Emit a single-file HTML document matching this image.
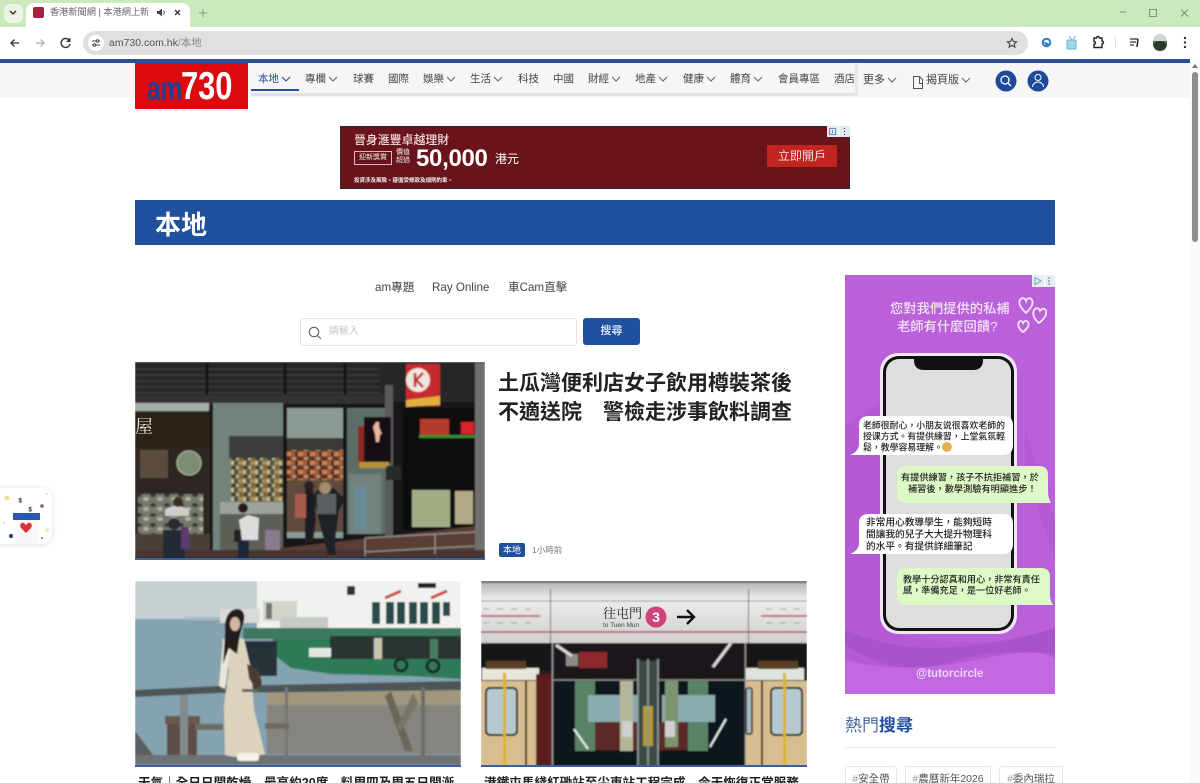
<!DOCTYPE html>
<html lang="zh-Hant"><head><meta charset="utf-8"><title>am730</title>
<style>
html,body{margin:0;padding:0;width:1200px;height:783px;overflow:hidden;background:#fff}
body{position:relative;font-family:"Liberation Sans","Noto Sans CJK TC",sans-serif;color:#333}
.a{position:absolute;white-space:nowrap}
.n{position:absolute;top:72px;font-size:10.5px;line-height:15px;color:#444;white-space:nowrap}
svg{position:absolute;overflow:hidden}
</style></head><body>
<!-- browser chrome -->
<div class="a" style="left:0;top:0;width:1200px;height:27px;background:#cbe8be"></div>
<div class="a" style="left:4px;top:4px;width:19px;height:19px;background:#eaf5e4;border-radius:6px"></div>
<div class="a" style="left:26px;top:3px;width:164px;height:24px;background:#fff;border-radius:8px 8px 0 0"></div>
<div class="a" style="left:33px;top:7px;width:11px;height:11px;background:#a5203f;border-radius:2px"></div>
<div class="a" style="left:50px;top:5px;font-size:9.2px;line-height:15px;color:#666;width:98px;overflow:hidden">香港新聞網 | 本港網上新聞</div>
<div class="a" style="left:83px;top:31px;width:945px;height:24px;background:#e0e0e0;border-radius:12px"></div>
<div class="a" style="left:88px;top:35px;width:16px;height:16px;background:#fff;border-radius:8px"></div>
<svg style="left:88px;top:35px" width="16" height="16" fill="none" stroke="#444"><path d="M4 6h4M11 6h1M4 10h1M8 10h4"/><circle cx="9.500" cy="6" r="1.300"/><circle cx="6.500" cy="10" r="1.300"/></svg>
<div class="a" style="left:109px;top:35px;font-size:10.500px;line-height:16px;color:#555">am730.com.hk<span style="color:#888">/本地</span></div>
<svg style="left:0;top:0" width="1200" height="62" fill="none">
<path d="M10 11l3 3 3-3" stroke="#333" stroke-width="1.500"/>
<path d="M157 11h2l3-2.500v8l-3-2.500h-2z" fill="#444"/><path d="M163.500 10.500q1.500 2 0 4" stroke="#444"/>
<path d="M175 10l5 5m0-5l-5 5" stroke="#333" stroke-width="1.300"/>
<path d="M203 9v8m-4-4h8" stroke="#8aa085" stroke-width="1"/>
<path d="M1120 12h6" stroke="#80907c"/><rect x="1149.500" y="9.500" width="7" height="7" stroke="#80907c"/><path d="M1181 9.500l7 7m0-7l-7 7" stroke="#80907c"/>
<path d="M19 43h-8m3.500-3.500L11 43l3.500 3.500" stroke="#333" stroke-width="1.300"/>
<path d="M36 43h8m-3.500-3.500L44 43l-3.500 3.500" stroke="#aaa" stroke-width="1.200"/>
<path d="M69 40a4.500 4.500 0 1 0 1 4" stroke="#333" stroke-width="1.400"/><path d="M70 38v3.500h-3.500" fill="#333" stroke="#333"/>
<path d="M1012 38.500l1.400 3 3.200.3-2.400 2.100.7 3.200-2.900-1.700-2.900 1.700.7-3.200-2.400-2.100 3.200-.3z" stroke="#444" stroke-width="1.100"/>
<circle cx="1046.500" cy="42.500" r="3.800" stroke="#2f80c8" stroke-width="2"/><path d="M1043 41l4 6 3-3z" fill="#2f80c8"/>
<rect x="1067" y="40" width="9" height="9" rx="1" fill="#a8d6e8" stroke="#63b4d2"/><path d="M1069 36l2.500 3.500m4-3.500l-2.500 3.500" stroke="#63b4d2"/>
<path d="M1094 38h2.500a1.500 1.500 0 0 1 3 0h2.500v3a1.500 1.500 0 0 1 0 3v3.500h-8v-3a1.500 1.500 0 0 0 0-3z" stroke="#222" stroke-width="1.400"/>
<path d="M1115.500 37v11" stroke="#ddd"/>
<path d="M1130 39h8m-8 3h6m-6 3h4" stroke="#333" stroke-width="1.200"/><path d="M1138 39l-1 8" stroke="#222" stroke-width="1.500"/>
<circle cx="1160" cy="42.500" r="7" fill="#5a6a52"/><path d="M1153 41a7 7 0 0 1 14 0z" fill="#cfd8d8"/><path d="M1153 44q7-6 14 0a7 7 0 0 1-14 0z" fill="#2c3a2a"/>
<circle cx="1185" cy="38" r="1.200" fill="#333"/><circle cx="1185" cy="42.500" r="1.200" fill="#333"/><circle cx="1185" cy="47" r="1.200" fill="#333"/>
</svg>
<!-- site nav -->
<div class="a" style="left:0;top:59px;width:1190px;height:4px;background:#2a5099"></div>
<div class="a" style="left:0;top:63px;width:1190px;height:35px;background:#f6f6f6"></div>
<div class="a" style="left:251px;top:93px;width:605px;height:3px;background:#e2e2e2"></div>
<div class="a" style="left:855px;top:63px;width:3px;height:33px;background:#e9e9e9"></div>
<div class="a" style="left:251px;top:89px;width:48px;height:2px;background:#2a4f9c"></div>
<div class="a" style="left:135px;top:63px;width:113px;height:46px;background:#dc0a0d;overflow:hidden"></div>
<div class="a" style="left:147px;top:69px;font:bold 34px/40px 'Liberation Sans',sans-serif;color:#1f3f95;transform:scaleX(.72);transform-origin:left">am</div>
<div class="a" style="left:181px;top:66px;font:bold 39px/42px 'Liberation Sans',sans-serif;color:#fff;transform:scaleX(.79);transform-origin:left">730</div>
<div class="n" style="left:258px;color:#24479a">本地</div>
<div class="n" style="left:305px">專欄</div><div class="n" style="left:353px">球賽</div><div class="n" style="left:388px">國際</div>
<div class="n" style="left:423px">娛樂</div><div class="n" style="left:470px">生活</div><div class="n" style="left:518px">科技</div>
<div class="n" style="left:553px">中國</div><div class="n" style="left:588px">財經</div><div class="n" style="left:635px">地產</div>
<div class="n" style="left:683px">健康</div><div class="n" style="left:730px">體育</div><div class="n" style="left:778px">會員專區</div>
<div class="n" style="left:834px;width:22px;overflow:hidden">酒店</div>
<div class="n" style="left:863px;top:73px;font-size:11px">更多</div><div class="n" style="left:926px;top:73px;font-size:11px">揭頁版</div>
<svg style="left:0;top:60px" width="1200" height="40" fill="none" stroke="#666" stroke-width="1">
<path d="M282 17l4 4 4-4" stroke="#24479a"/><path d="M329 17l4 4 4-4M447 17l4 4 4-4M494 17l4 4 4-4M612 17l4 4 4-4M659 17l4 4 4-4M707 17l4 4 4-4M754 17l4 4 4-4M888 18l4 4 4-4M962 18l4 4 4-4"/>
<path d="M913.500 16.500h6l3 3v9h-9zM919.500 16.500v7h3" stroke="#555"/>
<circle cx="1006" cy="21" r="10.500" fill="#1f4a9c" stroke="none"/><circle cx="1005" cy="20" r="4" stroke="#fff" stroke-width="1.300"/><path d="M1008 23l3 3" stroke="#fff" stroke-width="1.300"/>
<circle cx="1038" cy="21" r="10.500" fill="#1f4a9c" stroke="none"/><circle cx="1038" cy="17.500" r="3" stroke="#fff"/><path d="M1032.500 27a5.500 5 0 0 1 11 0" stroke="#fff"/>
</svg>
<!-- scrollbar -->
<div class="a" style="left:1190px;top:59px;width:10px;height:724px;background:#fafafa"></div>
<div class="a" style="left:1192px;top:72px;width:6px;height:170px;background:#8c8c8c;border-radius:3px"></div>
<svg style="left:1190px;top:62px" width="10" height="8"><path d="M2 6l3-4 3 4z" fill="#777"/></svg>
<!-- banner ad -->
<div class="a" style="left:340px;top:126px;width:510px;height:63px;background:#68141a;outline:1px solid #2a2a2a;outline-offset:-1px"></div>
<div class="a" style="left:354px;top:132px;font-size:11.900px;line-height:17px;font-weight:500;color:#f1dcdc">晉身滙豐卓越理財</div>
<div class="a" style="left:354px;top:151px;width:36px;height:12px;border:1px solid #d8b8b8;font-size:7px;line-height:12px;color:#eed;text-align:center">迎新獎賞</div>
<div class="a" style="left:396px;top:149px;width:14px;font-size:7px;line-height:8px;color:#eee;white-space:normal">價值超過</div>
<div class="a" style="left:416px;top:145px;font-size:24px;line-height:28px;font-weight:700;color:#fff;letter-spacing:-.3px">50,000</div>
<div class="a" style="left:495px;top:151px;font-size:12px;line-height:17px;color:#fff">港元</div>
<div class="a" style="left:354px;top:177px;font-size:5.500px;line-height:8px;color:#eee;font-weight:700">投資涉及風險。遵循受條款及細則約束。</div>
<div class="a" style="left:767px;top:145px;width:70px;height:22px;background:#c22420;color:#f4dede;font-size:12px;line-height:22px;text-align:center">立即開戶</div>
<div class="a" style="left:827px;top:126px;width:23px;height:11px;background:#dfeaf2"></div>
<svg style="left:827px;top:126px" width="23" height="11" fill="none" stroke="#5a94b8"><rect x="2.500" y="2.500" width="6" height="6"/><path d="M5.500 4v3"/><path d="M12 0v11" stroke="#fff"/><path d="M17.500 2v1m0 2v1m0 2v1" stroke="#334"/></svg>
<!-- section header -->
<div class="a" style="left:135px;top:200px;width:920px;height:45px;background:#21509f"></div>
<div class="a" style="left:155px;top:208px;font-size:26px;line-height:34px;font-weight:700;color:#fff">本地</div>
<div class="a" style="left:375px;top:280px;font-size:11.600px;line-height:16px;color:#444">am專題</div>
<div class="a" style="left:432px;top:280px;font-size:11.600px;line-height:16px;color:#444">Ray Online</div>
<div class="a" style="left:508px;top:280px;font-size:11.600px;line-height:16px;color:#444">車Cam直擊</div>
<div class="a" style="left:300px;top:318px;width:275px;height:26px;border:1px solid #e3e3e3;border-radius:3px"></div>
<svg style="left:306px;top:324px" width="18" height="18" fill="none" stroke="#555"><circle cx="8" cy="8" r="4.800"/><path d="M11.500 11.500l3.500 3.500"/></svg>
<div class="a" style="left:329px;top:324px;font-size:10px;line-height:15px;color:#c8c8c8">請輸入</div>
<div class="a" style="left:583px;top:318px;width:57px;height:27px;background:#21509f;border-radius:3px;color:#e8eef8;font-size:11px;line-height:27px;text-align:center;font-weight:500">搜尋</div>
<!-- hero photo -->
<svg style="left:135px;top:362px" width="350" height="198" viewBox="0 0 350 198">
<defs>
<filter id="b"><feGaussianBlur stdDeviation=".8"/></filter>
<pattern id="shelf" width="12" height="9" patternUnits="userSpaceOnUse"><rect width="12" height="9" fill="#6f6650"/><rect x="0" y="0" width="3" height="4" fill="#c9b98a"/><rect x="3" y="0" width="4" height="4" fill="#47503e"/><rect x="7" y="0" width="5" height="4" fill="#a88a5a"/><rect x="1" y="5" width="4" height="3" fill="#3d3a30"/><rect x="5" y="5" width="3" height="3" fill="#b8b090"/><rect x="8" y="5" width="4" height="3" fill="#7d6a3e"/></pattern>
<pattern id="shelf2" width="12" height="9" patternUnits="userSpaceOnUse"><rect width="12" height="9" fill="#7e3f30"/><rect x="0" y="0" width="4" height="4" fill="#b5563e"/><rect x="4" y="0" width="3" height="4" fill="#4c2a22"/><rect x="7" y="0" width="5" height="4" fill="#c0894e"/><rect x="1" y="5" width="4" height="3" fill="#a89a6a"/><rect x="6" y="5" width="5" height="3" fill="#5c3026"/></pattern>
<pattern id="case" width="14" height="10" patternUnits="userSpaceOnUse"><rect width="14" height="10" fill="#77786c"/><ellipse cx="4" cy="3" rx="3" ry="2" fill="#303a34"/><ellipse cx="11" cy="7" rx="3" ry="2" fill="#b0b0a4"/></pattern>
</defs>
<g filter="url(#b)">
<rect width="350" height="198" fill="#151517"/>
<rect width="350" height="40" fill="#262628"/>
<path d="M0 7h245M0 13h245M0 19h245M0 25h245M0 31h245" stroke="#3a3a3c" stroke-width="1.500"/>
<path d="M72 0v32M150 0v32M210 0v32" stroke="#171718" stroke-width="3"/>
<rect x="0" y="33" width="250" height="9" fill="#303030"/>
<rect x="0" y="41" width="74" height="8" fill="#a4aea9"/>
<rect x="0" y="49" width="75" height="37" fill="#2a2019"/>
<rect x="0" y="86" width="75" height="108" fill="#2f2621"/>
<rect x="5" y="88" width="28" height="28" fill="#5a4c3e"/>
<circle cx="54" cy="101" r="12" fill="#7c8c72" stroke="#b4bea8"/>
<rect x="3" y="132" width="65" height="40" fill="url(#case)"/><rect x="0" y="172" width="75" height="22" fill="#4a3f38"/>
<rect x="78" y="41" width="70" height="148" fill="#72837c"/>
<rect x="152" y="46" width="56" height="130" fill="#8c9a94"/>
<rect x="94" y="74" width="54" height="22" fill="#3a3c3a"/>
<rect x="96" y="96" width="52" height="44" fill="url(#shelf)"/>
<rect x="152" y="76" width="56" height="14" fill="#3a3a36"/>
<rect x="152" y="88" width="56" height="30" fill="url(#shelf2)"/>
<rect x="152" y="118" width="56" height="52" fill="#5e4c3c"/>
<rect x="85" y="140" width="63" height="12" fill="#9ba39c"/>
<rect x="85" y="152" width="63" height="36" fill="#5c5e56"/>
<rect x="212" y="46" width="40" height="126" fill="#5c6e68"/>
<rect x="214" y="112" width="32" height="60" fill="#72827c"/><rect x="220" y="124" width="12" height="44" fill="#6a8a98"/>
<rect x="223" y="64" width="10" height="40" fill="#8a2a24"/>
<rect x="268" y="46" width="72" height="122" fill="#0d0e10"/>
<rect x="277" y="128" width="38" height="37" fill="#a2ad84"/><rect x="320" y="129" width="18" height="33" fill="#b3a984"/>
<rect x="285" y="57" width="29" height="19" fill="#b23a2c"/><rect x="284" y="73" width="56" height="3" fill="#3d8a30"/>
<rect x="326" y="60" width="13" height="12" fill="#d9202a"/>
<rect x="271" y="2" width="34" height="42" fill="#c62a2e"/><circle cx="283" cy="18" r="12" fill="#f0e5dc"/><path d="M280 11v14m8-14l-7 7 7 7" stroke="#c62a2e" stroke-width="2.500" fill="none"/><path d="M271 38l34-4v9l-34 2z" fill="#e2b040"/>
<rect x="250" y="23" width="8" height="172" fill="#5a5a58"/><rect x="340" y="1" width="10" height="195" fill="#707070"/>
<rect x="229" y="55" width="27" height="46" fill="#171012"/><path d="M241 60h3v5l3 7h-2l-1 8h-3l-1-8-2-7 3-5z" fill="#e7b89c"/><rect x="224" y="100" width="30" height="6" fill="#b89232"/>
<rect x="251" y="104" width="15" height="14" fill="#25292c"/>
<path d="M60 196l280-32v32z" fill="#5a3c36"/>
<rect x="0" y="188" width="350" height="8" fill="#4a3430"/>
<path d="M230 176l110-6M230 190l110-6" stroke="#8c8c88" stroke-width="1.500"/><path d="M230 176v18M300 172v20" stroke="#8c8c88" stroke-width="1.500"/>
<path d="M104 158l9-5 11 3-1 22h-16z" fill="#dcdcdc"/><circle cx="108" cy="146" r="5" fill="#2a1e1a"/><rect x="103" y="178" width="11" height="18" fill="#1e2838"/><rect x="99" y="168" width="7" height="12" fill="#222"/>
<rect x="130" y="168" width="15" height="20" fill="#8a7a90"/>
<path d="M176 134l10-8 13 0 11 11-6 12-4 30 1 14h-8l-8-30-4-16z" fill="#1f2126"/><circle cx="190" cy="126" r="6" fill="#a08a70"/><rect x="182" y="132" width="19" height="20" fill="#5c5e62"/>
<path d="M170 128h8l3 30-3 22h-8z" fill="#1a1a20"/><rect x="160" y="132" width="11" height="24" fill="#a85a50"/><circle cx="174" cy="124" r="5" fill="#2a2020"/>
<rect x="28" y="168" width="22" height="28" fill="#242c38"/><circle cx="39" cy="162" r="6" fill="#2a2a30"/>
<path d="M30 148q10-8 24 0v6H30z" fill="#cfcfca"/><circle cx="43" cy="140" r="5" fill="#3a2a24"/>
<rect x="46" y="165" width="8" height="22" fill="#5a3a70"/>
</g>
<text x="0" y="71" font-size="18" fill="#efe8d8" font-family="Noto Serif CJK SC,serif">屋</text>
<rect y="196" width="350" height="2" fill="#3f5e9e"/>
</svg>
<div class="a" style="left:498px;top:369px;font-size:21px;line-height:29px;font-weight:700;color:#222;white-space:pre">土瓜灣便利店女子飲用樽裝茶後
不適送院　警檢走涉事飲料調查</div>
<div class="a" style="left:499px;top:543px;width:26px;height:14px;background:#21509f;border-radius:2px;color:#fff;font-size:9px;line-height:14px;text-align:center">本地</div>
<div class="a" style="left:532px;top:543px;font-size:8.500px;line-height:14px;color:#777">1小時前</div>
<!-- ferry photo -->
<svg style="left:135px;top:581px" width="326" height="186" viewBox="0 0 326 186">
<g filter="url(#b)">
<rect width="326" height="186" fill="#84a2b0"/>
<rect width="326" height="38" fill="#c6d0d2"/>
<rect x="50" y="36" width="80" height="3" fill="#a9bbc2"/>
<rect x="122" y="0" width="204" height="50" fill="#f0f2ef"/>
<rect x="85" y="28" width="40" height="14" fill="#d9dcd9"/>
<g fill="#2c4a48"><rect x="237" y="21" width="8" height="22"/><rect x="251" y="21" width="8" height="22"/><rect x="262" y="21" width="8" height="22"/><rect x="274" y="21" width="8" height="22"/><rect x="285" y="21" width="8" height="22"/><rect x="297" y="21" width="8" height="22"/><rect x="308" y="21" width="7" height="14"/></g>
<rect x="128" y="20" width="34" height="20" fill="#d4d4ca"/><rect x="131" y="22" width="6" height="16" fill="#777"/>
<rect x="145" y="36" width="48" height="14" fill="#c6ccc4"/>
<rect x="212" y="5" width="8" height="9" fill="#333"/>
<path d="M250 17l16-7M296 17l16-7" stroke="#c9483c" stroke-width="3"/>
<rect x="283" y="2" width="18" height="5" fill="#222"/>
<path d="M108 47h218v11H108z" fill="#3a7a5e"/>
<path d="M138 58h188v40l-50-3-80-2-40-6-18-14z" fill="#2f7a58"/>
<rect x="195" y="55" width="131" height="23" fill="#2a3630"/><rect x="239" y="57" width="8" height="21" fill="#c8c4b0"/><rect x="295" y="58" width="8" height="20" fill="#4a7a60"/>
<rect x="174" y="67" width="22" height="9" fill="#e2e8e0"/>
<rect x="108" y="60" width="34" height="35" fill="#263038"/>
<circle cx="266" cy="84" r="6" fill="none" stroke="#1c2a28" stroke-width="3"/><circle cx="298" cy="85" r="6" fill="none" stroke="#1c2a28" stroke-width="3"/>
<rect x="132" y="109" width="194" height="64" fill="#85847e"/>
<rect x="132" y="109" width="194" height="15" fill="#a0977e"/>
<path d="M0 109l85-4 241-5v9l-241 3-85 4z" fill="#4e5456"/>
<path d="M256 110l22 60h-8l-20-55z" fill="#6b665a"/><path d="M278 112l-16 34 4 4 17-28z" fill="#7a7568"/>
<rect x="286" y="106" width="4" height="68" fill="#6d6d68"/><rect x="150" y="106" width="3" height="70" fill="#75777a"/>
<rect x="32" y="142" width="30" height="36" fill="#5a4e46"/><rect x="30" y="135" width="35" height="8" fill="#6a5a4e"/><path d="M60 143h28v6H60zM130 142h24v6h-24z" fill="#6e6a60"/>
<rect x="45" y="114" width="8" height="68" fill="#848a8c"/>
<path d="M0 150l24 32H0z" fill="#585e60"/>
<rect x="0" y="174" width="326" height="10" fill="#6e7276"/>
<path d="M87 58l12-3 10 3 7 30 3 40 11 45q-20 6-40 1l-1-50 5-35z" fill="#dcd3bd"/>
<path d="M88 60l-4 45 6 3 5-40z" fill="#ebe6d8"/>
<path d="M90 42q3-15 14-14 8 3 4 15l-3 10-3 20-8-6-6 16 2-30z" fill="#231a1c"/><ellipse cx="100" cy="43" rx="5" ry="7" fill="#d7b6a4"/>
<path d="M112 83l12 6 3 14-6 6-7-12z" fill="#4c3a30"/>
<path d="M107 108h16v3h-16z" fill="#6a665c"/>
<rect x="102" y="172" width="22" height="8" rx="3" fill="#f3f1ea"/>
</g>
<rect y="184" width="326" height="2" fill="#3f5e9e"/>
</svg>
<div class="a" style="left:138px;top:774px;font-size:12.600px;line-height:19px;font-weight:700;color:#222">天氣｜全日日間乾燥　最高約20度　料周四及周五日間漸</div>
<!-- mtr photo -->
<svg style="left:481px;top:581px" width="326" height="186" viewBox="0 0 326 186">
<defs><linearGradient id="s" x1="0" x2="0" y1="0" y2="1"><stop offset="0" stop-color="#b4b4b2"/><stop offset=".3" stop-color="#ececea"/><stop offset="1" stop-color="#d0cfce"/></linearGradient></defs>
<g filter="url(#b)">
<rect width="326" height="186" fill="#141618"/>
<rect width="326" height="62" fill="url(#s)"/>
<rect width="326" height="2" fill="#555"/>
<path d="M0 20h326" stroke="#8e8e8e"/>
<path d="M0 51h326" stroke="#a5495f" stroke-width="1.500"/>
<path d="M69.500 8v54M267.500 8v54" stroke="#6a6a6a"/>
<path d="M0 35h59M280 35h46" stroke="#b3385f" stroke-width="1.500"/>
<path d="M2 28h55M2 42h55M285 28h35M285 42h35" stroke="#999" stroke-dasharray="6 8"/>
<rect x="0" y="62" width="71" height="124" fill="#2a1f1e"/>
<rect x="0" y="62" width="71" height="28" fill="#151516"/>
<rect x="1" y="87" width="57" height="12" fill="#e8e6da"/>
<rect x="0" y="100" width="71" height="86" fill="#d8bd90"/>
<rect x="5" y="107" width="31" height="47" rx="4" fill="#b6c9d0" stroke="#141414" stroke-width="2"/>
<rect x="44" y="100" width="2" height="86" fill="#3a2a20"/>
<rect x="55" y="93" width="16" height="93" fill="#5a1f1a"/>
<rect x="22" y="92" width="3" height="94" fill="#d9b42a"/>
<rect x="5" y="80" width="40" height="8" fill="#5a4024"/>
<rect x="71" y="62" width="193" height="124" fill="#10141a"/>
<rect x="71" y="62" width="193" height="36" fill="#1a191b"/>
<rect x="98" y="71" width="28" height="16" fill="#8c2a2a"/>
<rect x="85" y="73" width="12" height="12" fill="#8a8a86"/>
<path d="M75 64l16 11M250 62l-18 24" stroke="#d8d8d4" stroke-width="3"/>
<path d="M71 99h193" stroke="#9a9a90" stroke-width="1.200"/>
<rect x="94" y="100" width="20" height="70" fill="#5a8266"/>
<rect x="207" y="100" width="20" height="70" fill="#5a8266"/>
<rect x="107" y="114" width="50" height="27" fill="#8cabb0"/><rect x="181" y="114" width="53" height="27" fill="#8cabb0"/>
<rect x="114" y="141" width="93" height="28" fill="#5c2a26"/>
<rect x="139" y="100" width="13" height="70" fill="#b4b69a"/><rect x="184" y="100" width="13" height="66" fill="#7d9470"/>
<rect x="157" y="80" width="20" height="106" fill="#3e4a44"/><rect x="162" y="125" width="10" height="40" fill="#b49a34"/>
<path d="M157 78v108M177 78v108M167 78v108" stroke="#8a9694" stroke-width="1.800"/>
<rect x="141" y="140" width="10" height="16" fill="#cfcfcf"/><rect x="184" y="140" width="10" height="16" fill="#cfcfcf"/>
<path d="M93 148l14 20M245 138l-16 28" stroke="#e4eeec" stroke-width="2"/>
<path d="M71.500 62v124M264.500 62v124" stroke="#a0a0a0" stroke-width="1.500"/>
<rect x="265" y="62" width="61" height="124" fill="#231d1c"/>
<rect x="265" y="62" width="61" height="26" fill="#141415"/>
<rect x="265" y="87" width="58" height="12" fill="#dfe4dc"/>
<rect x="265" y="100" width="61" height="86" fill="#d8bd90"/>
<rect x="265" y="107" width="6" height="46" rx="2" fill="#a8bcc2" stroke="#141414" stroke-width="1.500"/>
<rect x="290" y="107" width="31" height="47" rx="4" fill="#b6c9d0" stroke="#141414" stroke-width="2"/>
<rect x="280" y="100" width="2" height="86" fill="#3a2a20"/>
<rect x="302" y="92" width="3" height="94" fill="#d9b42a"/>
<rect x="277" y="80" width="40" height="8" fill="#5a4024"/>
</g>
<circle cx="175" cy="36" r="10.500" fill="#d0437a"/>
<path d="M196 36h17m-7-7l7 7-7 7" stroke="#111" stroke-width="2.400" fill="none"/>
<text x="122" y="37" font-family="Noto Serif CJK SC,serif" font-size="13" fill="#222">往屯門</text>
<text x="122" y="46" font-family="Liberation Sans,sans-serif" font-size="6.500" fill="#444">to Tuen Mun</text>
<text x="175" y="41" text-anchor="middle" font-family="Liberation Sans,sans-serif" font-size="14" font-weight="700" fill="#fff">3</text>
<rect y="184" width="326" height="2" fill="#3f5e9e"/>
</svg>
<div class="a" style="left:484px;top:774px;font-size:12.600px;line-height:19px;font-weight:700;color:#222">港鐵屯馬綫紅磡站至尖東站工程完成　今天恢復正常服務</div>
<!-- side ad -->
<svg style="left:845px;top:275px" width="210" height="419" viewBox="0 0 210 419">
<rect width="210" height="419" fill="#ba60da"/>
<path d="M0 150l40-25v230q80 25 170 0v-70l-30-90v-40l30 90v174H0z" fill="#ab55cc" opacity=".45"/>
<path d="M0 355q50 20 100 18t110-20v25q-60-5-110 10T0 370z" fill="#a24fc4" opacity=".6"/>
<path d="M0 385q60 15 130 0t80 0v34H0z" fill="#c467e2"/>
<rect x="35" y="78" width="137" height="281" rx="18" fill="#f1e6f4"/>
<rect x="38" y="81" width="131" height="275" rx="16" fill="#111"/>
<rect x="41" y="84" width="125" height="269" rx="13" fill="#dedede"/>
<path d="M69 81h69v4q0 10-10 10H79q-10 0-10-10z" fill="#111"/>
<path d="M14 150q0-9 10-9h134q10 0 10 9v20q0 10-10 10H5q8-3 9-10z" fill="#fff"/>
<path d="M52 200q0-9 10-9h132q9 0 9 9v18q0 4 3 10H62q-10 0-10-10z" fill="#dcf9c6"/>
<path d="M14 248q0-9 10-9h134q10 0 10 9v21q0 10-10 10H5q8-3 9-10z" fill="#fff"/>
<path d="M52 302q0-9 10-9h134q9 0 9 9v19q0 4 3 9H62q-10 0-10-10z" fill="#dcf9c6"/>
<g fill="none" stroke="#f2e3f8" stroke-width="1.800"><path d="M181 38c-5-5-8-9-6-13 2-3 5-2 6 1 1-3 4-4 6-1 2 4-1 8-6 13z"/><path d="M194 48c-5-4-7-9-5-13 2-3 5-2 6 1 2-3 5-3 6 0 1 4-2 8-7 12z"/><path d="M178 57c-4-3-6-7-4-10 2-2 3-1 4 1 1-2 3-3 5-1 2 3-1 7-5 10z"/></g>
<circle cx="102" cy="172" r="5" fill="#e8b04c"/>
<text x="45" y="38" font-family="Liberation Sans,Noto Sans CJK TC,sans-serif" font-size="13.300" font-weight="500" fill="#f3e3f8">您對我們提供的私補</text>
<text x="52" y="56" font-family="Liberation Sans,Noto Sans CJK TC,sans-serif" font-size="13.300" font-weight="500" fill="#f3e3f8">老師有什麼回饋?</text>
<g font-family="Liberation Sans,Noto Sans CJK TC,sans-serif" font-weight="500" fill="#222">
<g font-size="8.900"><text x="18" y="153.500">老師很耐心，小朋友说很喜欢老師的</text>
<text x="18" y="164.500">授课方式。有提供練習，上堂氣氛輕</text>
<text x="18" y="175.500">鬆，教學容易理解。</text></g>
<g font-size="9.200"><text x="56" y="205.500">有提供練習，孩子不抗拒補習，於</text>
<text x="63" y="217">補習後，數學測驗有明顯進步！</text></g>
<g font-size="9.700"><text x="21" y="250.500">非常用心教導學生，能夠短時</text>
<text x="21" y="262.500">間讓我的兒子大大提升物理科</text>
<text x="21" y="274.500">的水平。有提供詳細筆記</text></g>
<g font-size="9.150"><text x="58" y="307.500">教學十分認真和用心，非常有責任</text>
<text x="58" y="318.500">感，準備充足，是一位好老師。</text></g>
</g>
<text x="71" y="402" font-family="Liberation Sans,sans-serif" font-size="11.500" font-weight="700" fill="#ecd6f4">@tutorcircle</text>
<rect x="187" y="0" width="23" height="12" fill="#e6edf4"/><path d="M190 2.500v7l6-3.500z" fill="none" stroke="#66a6cc"/><path d="M199.500 0v12" stroke="#fff"/><path d="M204 2.500v1m0 2v1m0 2v1" stroke="#2d6a4f" stroke-width="1.500"/>
</svg>
<div class="a" style="left:845px;top:714px;font-size:17px;line-height:24px;color:#4b6a9c;font-weight:400">熱門<span style="color:#21509f;font-weight:700">搜尋</span></div>
<div class="a" style="left:845px;top:747px;width:210px;height:1px;background:#e9e9e9"></div>
<div class="a" style="left:845px;top:766px;width:50px;height:30px;border:1px solid #e8e8e8;border-radius:3px;font-size:10.500px;line-height:24px;color:#555;text-align:center"><span style="color:#999">#</span>安全帶</div>
<div class="a" style="left:905px;top:766px;width:84px;height:30px;border:1px solid #e8e8e8;border-radius:3px;font-size:10.500px;line-height:24px;color:#555;text-align:center"><span style="color:#999">#</span>農曆新年2026</div>
<div class="a" style="left:999px;top:766px;width:62px;height:30px;border:1px solid #e8e8e8;border-radius:3px;font-size:10.500px;line-height:24px;color:#555;text-align:center"><span style="color:#999">#</span>委內瑞拉</div>
<!-- floating widget -->
<div class="a" style="left:-12px;top:488px;width:64px;height:56px;background:#fff;border-radius:10px;box-shadow:0 1px 6px rgba(0,0,0,.13)"></div>
<svg style="left:0;top:488px" width="54" height="58">
<rect x="16" y="27" width="23" height="29" fill="#f8f8f8"/><rect x="13" y="25" width="27" height="7" fill="#2b55b2"/>
<path d="M26 45l-5-5c-2-3 0-6 3-5l2 2 2-2c3-1 5 2 3 5z" fill="#d9333f"/>
<circle cx="7" cy="10" r="2.500" fill="#f3e08a"/><circle cx="20" cy="12" r="3" fill="#eee"/><circle cx="30" cy="21" r="3" fill="#eee"/>
<text x="18.500" y="14.500" font-size="6" font-weight="700" fill="#333" font-family="Liberation Sans,sans-serif">$</text><text x="28.500" y="23.500" font-size="6" font-weight="700" fill="#333" font-family="Liberation Sans,sans-serif">$</text>
<circle cx="42" cy="18" r="1.800" fill="#8e5a6a"/><circle cx="11" cy="48" r="2" fill="#2b3a6a"/><circle cx="4" cy="35" r="1" fill="#c8d0e8"/><circle cx="47" cy="42" r="2" fill="#f3ecc0"/><circle cx="42" cy="50" r="1" fill="#667"/><circle cx="47" cy="6" r="1" fill="#ddd"/>
</svg>
</body></html>
